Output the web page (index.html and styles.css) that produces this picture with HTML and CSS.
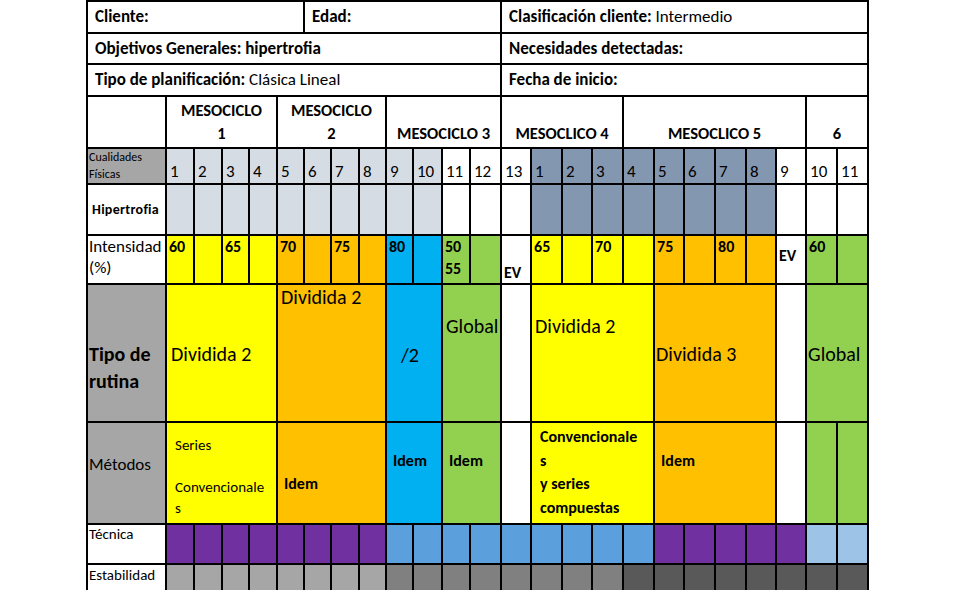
FILE: index.html
```html
<!DOCTYPE html>
<html lang="es">
<head>
<meta charset="utf-8">
<title>Planificación</title>
<link rel="stylesheet" href="styles.css">
</head>
<body>
<table class="plan">
  <colgroup>
    <col class="c-label">
    <col class="c28"><col class="c28"><col class="c27"><col class="c28"><col class="c27"><col class="c27"><col class="c28"><col class="c27"><col class="c27"><col class="c29"><col class="c28"><col class="c31">
    <col class="c30"><col class="c31"><col class="c30"><col class="c31"><col class="c31"><col class="c30"><col class="c31"><col class="c31"><col class="c30"><col class="c30"><col class="c31"><col class="c31">
  </colgroup>
  <tbody>
    <tr class="r-info">
      <td class="info" colspan="6"><b>Cliente:</b></td>
      <td class="info" colspan="7"><b>Edad:</b></td>
      <td class="info" colspan="12"><b>Clasificación cliente:</b> Intermedio</td>
    </tr>
    <tr class="r-info2">
      <td class="info" colspan="13"><b>Objetivos Generales: hipertrofia</b></td>
      <td class="info" colspan="12"><b>Necesidades detectadas:</b></td>
    </tr>
    <tr class="r-info">
      <td class="info" colspan="13"><b>Tipo de planificación:</b> Clásica Lineal</td>
      <td class="info" colspan="12"><b>Fecha de inicio:</b></td>
    </tr>
    <tr class="r-meso">
      <td></td>
      <td class="meso" colspan="4">MESOCICLO<br>1</td>
      <td class="meso" colspan="4">MESOCICLO<br>2</td>
      <td class="meso" colspan="4">MESOCICLO 3</td>
      <td class="meso" colspan="4">MESOCLICO 4</td>
      <td class="meso" colspan="6">MESOCLICO 5</td>
      <td class="meso" colspan="2">6</td>
    </tr>
    <tr class="r-num">
      <td class="gr cual">Cualidades<br>Físicas</td>
      <td class="lg num">1</td><td class="lg num">2</td><td class="lg num">3</td><td class="lg num">4</td><td class="lg num">5</td><td class="lg num">6</td><td class="lg num">7</td><td class="lg num">8</td><td class="lg num">9</td><td class="lg num">10</td><td class="num">11</td><td class="num">12</td>
      <td class="num">13</td><td class="sl num">1</td><td class="sl num">2</td><td class="sl num">3</td><td class="sl num">4</td><td class="sl num">5</td><td class="sl num">6</td><td class="sl num">7</td><td class="sl num">8</td><td class="num">9</td><td class="num">10</td><td class="num">11</td>
    </tr>
    <tr class="r-hip">
      <td class="hip">Hipertrofia</td>
      <td class="lg"></td><td class="lg"></td><td class="lg"></td><td class="lg"></td><td class="lg"></td><td class="lg"></td><td class="lg"></td><td class="lg"></td><td class="lg"></td><td class="lg"></td><td></td><td></td>
      <td></td><td class="sl"></td><td class="sl"></td><td class="sl"></td><td class="sl"></td><td class="sl"></td><td class="sl"></td><td class="sl"></td><td class="sl"></td><td></td><td></td><td></td>
    </tr>
    <tr class="r-int">
      <td class="intl">Intensidad<br>(%)</td>
      <td class="y pct">60</td><td class="y"></td><td class="y pct">65</td><td class="y"></td>
      <td class="o pct">70</td><td class="o"></td><td class="o pct">75</td><td class="o"></td>
      <td class="b pct">80</td><td class="b"></td>
      <td class="g pct">50<br>55</td><td class="g"></td>
      <td class="ev ev-bot">EV</td>
      <td class="y pct">65</td><td class="y"></td><td class="y pct">70</td><td class="y"></td>
      <td class="o pct">75</td><td class="o"></td><td class="o pct">80</td><td class="o"></td>
      <td class="ev ev-mid">EV</td>
      <td class="g pct">60</td><td class="g"></td>
    </tr>
    <tr class="r-tipo">
      <td class="gr big">Tipo de<br>rutina</td>
      <td class="y tr tr-mid" colspan="4">Dividida 2</td>
      <td class="o tr tr-top" colspan="4">Dividida 2</td>
      <td class="b tr tr-ctr" colspan="2">/2</td>
      <td class="g tr tr-up" colspan="2">Global</td>
      <td></td>
      <td class="y tr tr-up" colspan="4">Dividida 2</td>
      <td class="o tr tr-mid tr-flush" colspan="4">Dividida 3</td>
      <td></td>
      <td class="g tr tr-mid tr-flush" colspan="2">Global</td>
    </tr>
    <tr class="r-met">
      <td class="gr metl">Métodos</td>
      <td class="y met-series" colspan="4">Series<br><br>Convencionale<br>s</td>
      <td class="o idem idem-low" colspan="4">Idem</td>
      <td class="b idem" colspan="2">Idem</td>
      <td class="g idem" colspan="2">Idem</td>
      <td></td>
      <td class="y met-conv" colspan="4">Convencionale<br>s<br>y series<br>compuestas</td>
      <td class="o idem" colspan="4">Idem</td>
      <td></td>
      <td class="g"></td><td class="g"></td>
    </tr>
    <tr class="r-tec">
      <td class="small-l">Técnica</td>
      <td class="pu"></td><td class="pu"></td><td class="pu"></td><td class="pu"></td><td class="pu"></td><td class="pu"></td><td class="pu"></td><td class="pu"></td>
      <td class="mb"></td><td class="mb"></td><td class="mb"></td><td class="mb"></td><td class="mb"></td>
      <td class="mb"></td><td class="mb"></td><td class="mb"></td><td class="mb"></td>
      <td class="pu"></td><td class="pu"></td><td class="pu"></td><td class="pu"></td><td class="pu"></td>
      <td class="lb"></td><td class="lb"></td>
    </tr>
    <tr class="r-est">
      <td class="small-l small-est">Estabilidad</td>
      <td class="gr"></td><td class="gr"></td><td class="gr"></td><td class="gr"></td><td class="gr"></td><td class="gr"></td><td class="gr"></td><td class="gr"></td>
      <td class="g2"></td><td class="g2"></td><td class="g2"></td><td class="g2"></td><td class="g2"></td><td class="g2"></td><td class="g2"></td><td class="g2"></td>
      <td class="g3"></td><td class="g3"></td><td class="g3"></td><td class="g3"></td><td class="g3"></td><td class="g3"></td><td class="g3"></td><td class="g3"></td>
    </tr>
  </tbody>
</table>
</body>
</html>
```
FILE: styles.css
```css
html, body {
  margin: 0;
  padding: 0;
  background: #ffffff;
  overflow: hidden;
}
body {
  width: 960px;
  height: 590px;
  font-family: "Carlito", "Lato", "Liberation Sans", sans-serif;
  color: #000;
}
.plan {
  border-collapse: collapse;
  table-layout: fixed;
  width: 781px;
  margin: 0 0 0 86px;
}
.plan td {
  border: 2px solid #000;
  padding: 0;
  font-size: 17px;
  line-height: 20px;
  vertical-align: middle;
  white-space: nowrap;
  overflow: hidden;
}
.c-label { width: 79px; }
.c27 { width: 27px; }
.c28 { width: 28px; }
.c29 { width: 29px; }
.c30 { width: 30px; }
.c31 { width: 31px; }

.r-info { height: 32px; }
.r-info2 { height: 31px; }
.r-meso { height: 52px; }
.r-num { height: 35px; }
.r-hip { height: 51px; }
.r-int { height: 49px; }
.r-tipo { height: 138px; }
.r-met { height: 102px; }
.r-tec { height: 40px; }
.r-est { height: 30px; }

.plan td.info {
  padding-left: 7px;
  font-size: 17px;
}

.plan td.meso {
  text-align: center;
  vertical-align: bottom;
  font-weight: 700;
  font-size: 16.5px;
  line-height: 23px;
  padding: 0 0 2px;
}

.plan td.cual {
  font-size: 12px;
  line-height: 17px;
  vertical-align: top;
  padding-left: 1px;
}
.plan td.num {
  font-size: 17px;
  vertical-align: bottom;
  padding: 0 0 1px 3px;
}
.plan td.hip {
  font-size: 14px;
  font-weight: 700;
  padding-left: 4px;
  letter-spacing: 0.3px;
}
.plan td.intl {
  font-size: 17px;
  line-height: 21px;
  vertical-align: top;
  padding: 0 0 0 1px;
}
.plan td.pct {
  font-size: 16px;
  font-weight: 700;
  line-height: 22px;
  vertical-align: top;
  padding: 0 0 0 2px;
}
.plan td.ev {
  font-size: 16px;
  font-weight: 700;
  line-height: 18px;
  padding-left: 2px;
}
.plan td.ev-bot { vertical-align: bottom; padding-bottom: 1px; }
.plan td.ev-mid { padding-bottom: 7px; }

.plan td.big {
  font-size: 20px;
  font-weight: 700;
  line-height: 27px;
  padding-left: 1px;
  padding-top: 29px;
}
.plan td.tr {
  font-size: 20px;
  line-height: 24px;
  padding-left: 4px;
}
.plan td.tr-flush { padding-left: 1px; }
.plan td.tr-top { vertical-align: top; padding-top: 0; padding-left: 3px; }
.plan td.tr-mid { padding-top: 2px; }
.plan td.tr-ctr { text-align: center; padding: 4px 8px 0 0; }
.plan td.tr-up { padding-bottom: 54px; padding-left: 3px; }

.plan td.metl {
  font-size: 17px;
  padding-left: 1px;
  padding-bottom: 16px;
}
.plan td.met-series {
  vertical-align: top;
  padding: 12px 0 0 8px;
  line-height: 21px;
  font-size: 15px;
}
.plan td.idem {
  font-size: 16px;
  font-weight: 700;
  vertical-align: top;
  padding: 28px 0 0 6px;
}
.plan td.idem-low { padding-top: 51px; }
.plan td.met-conv {
  font-size: 16px;
  font-weight: 700;
  line-height: 23.7px;
  vertical-align: top;
  padding: 2px 0 0 8px;
}
.plan td.small-l {
  font-size: 15px;
  line-height: 18px;
  vertical-align: top;
  padding: 0 0 0 1px;
}
.plan td.small-est { padding-top: 1px; }

.y { background: #ffff00; }
.o { background: #ffc000; }
.b { background: #00b0f0; }
.g { background: #92d050; }
.lg { background: #d6dce4; }
.sl { background: #8497b0; }
.gr { background: #a6a6a6; }
.pu { background: #7030a0; }
.mb { background: #5b9fdc; }
.lb { background: #9dc3e6; }
.g2 { background: #808080; }
.g3 { background: #595959; }
```
